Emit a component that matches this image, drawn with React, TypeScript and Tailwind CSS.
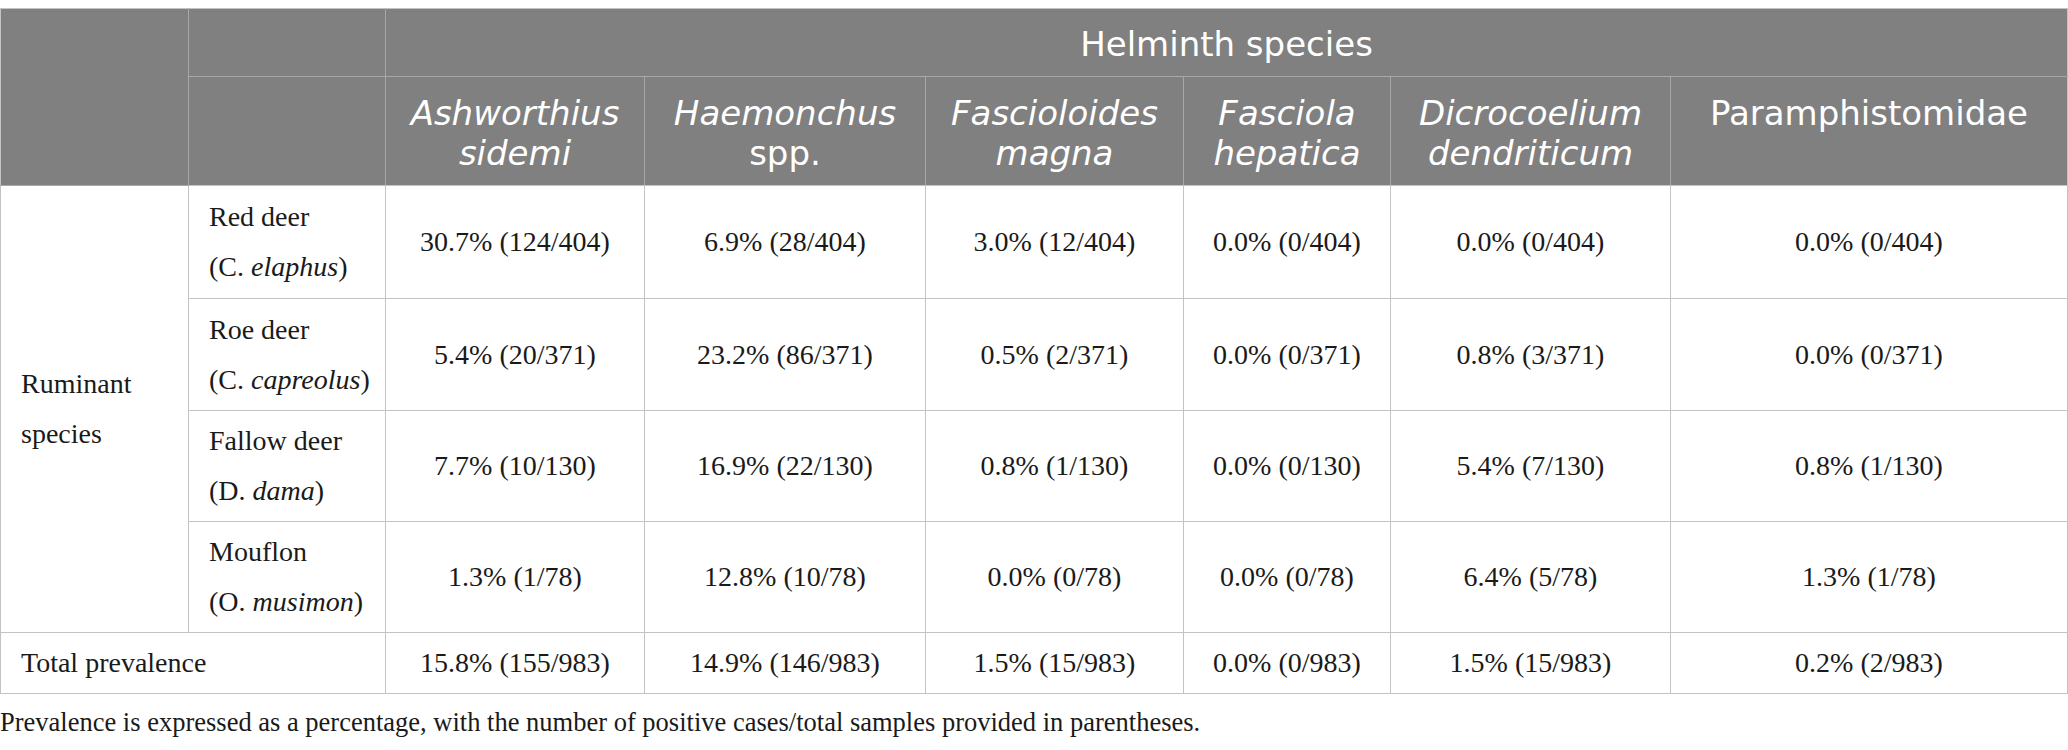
import React from "react";

type Row = { name: string; genus: string; species: string; vals: string[] };

const rows: Row[] = [
  {
    name: "Red deer",
    genus: "C.",
    species: "elaphus",
    vals: ["30.7% (124/404)", "6.9% (28/404)", "3.0% (12/404)", "0.0% (0/404)", "0.0% (0/404)", "0.0% (0/404)"],
  },
  {
    name: "Roe deer",
    genus: "C.",
    species: "capreolus",
    vals: ["5.4% (20/371)", "23.2% (86/371)", "0.5% (2/371)", "0.0% (0/371)", "0.8% (3/371)", "0.0% (0/371)"],
  },
  {
    name: "Fallow deer",
    genus: "D.",
    species: "dama",
    vals: ["7.7% (10/130)", "16.9% (22/130)", "0.8% (1/130)", "0.0% (0/130)", "5.4% (7/130)", "0.8% (1/130)"],
  },
  {
    name: "Mouflon",
    genus: "O.",
    species: "musimon",
    vals: ["1.3% (1/78)", "12.8% (10/78)", "0.0% (0/78)", "0.0% (0/78)", "6.4% (5/78)", "1.3% (1/78)"],
  },
];

const totals = ["15.8% (155/983)", "14.9% (146/983)", "1.5% (15/983)", "0.0% (0/983)", "1.5% (15/983)", "0.2% (2/983)"];

const sans = "font-['DejaVu_Sans',sans-serif]";
const serif = "font-['Liberation_Serif',serif]";

const h2 = "border border-[#a8a8a8] border-b-[#c3c3c3] align-top pt-[16px] font-normal";

export default function App() {
  return (
    <div className="bg-white w-[2068px] h-[750px] pt-[8px]">
      <table className="table-fixed border-collapse w-[2067px] border border-[#c3c3c3]">
        <colgroup>
          <col className="w-[188px]" />
          <col className="w-[197px]" />
          <col className="w-[259px]" />
          <col className="w-[281px]" />
          <col className="w-[258px]" />
          <col className="w-[207px]" />
          <col className="w-[280px]" />
          <col className="w-[397px]" />
        </colgroup>
        <thead className={`${sans} text-white bg-[#808080] text-[34px] leading-[40px] font-normal`}>
          <tr className="h-[68px]">
            <th rowSpan={2} className="border border-[#a8a8a8] border-t-[#c3c3c3] border-l-[#c3c3c3]" />
            <th className="border border-[#a8a8a8] border-t-[#c3c3c3]" />
            <th colSpan={6} className="border border-[#a8a8a8] border-t-[#c3c3c3] border-r-[#c3c3c3] font-normal align-middle pt-[2px]">
              Helminth species
            </th>
          </tr>
          <tr className="h-[109px]">
            <th className="border border-[#a8a8a8] border-b-[#c3c3c3]" />
            <th className={`${h2} italic`}>
              Ashworthius
              <br />
              sidemi
            </th>
            <th className={h2}>
              <span className="italic">Haemonchus</span>
              <br />
              spp.
            </th>
            <th className={`${h2} italic`}>
              Fascioloides
              <br />
              magna
            </th>
            <th className={`${h2} italic`}>
              Fasciola
              <br />
              hepatica
            </th>
            <th className={`${h2} italic`}>
              Dicrocoelium
              <br />
              dendriticum
            </th>
            <th className={`${h2} border-r-[#c3c3c3]`}>Paramphistomidae</th>
          </tr>
        </thead>
        <tbody className={`${serif} text-[28px] leading-[50px] text-[#1a1a1a]`}>
          {rows.map((r, i) => (
            <tr key={r.name} className={i === 0 ? "h-[113px]" : i === 1 ? "h-[112px]" : "h-[111px]"}>
              {i === 0 && (
                <td rowSpan={4} className="border border-[#c3c3c3] pl-[20px] align-middle">
                  Ruminant
                  <br />
                  species
                </td>
              )}
              <td className="border border-[#c3c3c3] pl-[20px] align-middle">
                {r.name}
                <br />({r.genus} <span className="italic">{r.species}</span>)
              </td>
              {r.vals.map((v, j) => (
                <td key={j} className="border border-[#c3c3c3] text-center align-middle">
                  {v}
                </td>
              ))}
            </tr>
          ))}
          <tr className="h-[61px]">
            <td colSpan={2} className="border border-[#c3c3c3] pl-[20px] align-middle">
              Total prevalence
            </td>
            {totals.map((v, j) => (
              <td key={j} className="border border-[#c3c3c3] text-center align-middle">
                {v}
              </td>
            ))}
          </tr>
        </tbody>
      </table>
      <p className={`${serif} text-[26.5px] leading-[40px] text-[#1a1a1a] mt-[8px]`}>
        Prevalence is expressed as a percentage, with the number of positive cases/total samples provided in parentheses.
      </p>
    </div>
  );
}
